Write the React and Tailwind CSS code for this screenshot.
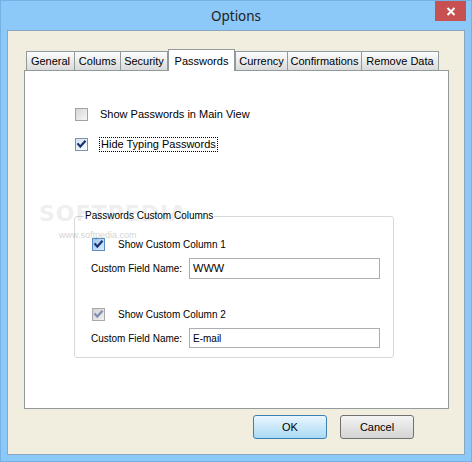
import React from "react";

const tabs = [
  { name: "General", w: "w-[48px]" },
  { name: "Colums", w: "w-[46px]" },
  { name: "Security", w: "w-[48px]" },
  { name: "Passwords", w: "w-[67px]", active: true },
  { name: "Currency", w: "w-[52px]" },
  { name: "Confirmations", w: "w-[74px]" },
  { name: "Remove Data", w: "w-[78px]", last: true },
];

function Check({ color }) {
  return (
    <svg width="11" height="11" viewBox="0 0 11 11">
      <path d="M2.2 5.2 L4.3 7.6 L8.8 2.6" fill="none" stroke={color} strokeWidth="2.2" strokeLinecap="square" />
    </svg>
  );
}

function CheckBox({ variant }) {
  if (variant === "off") {
    return (
      <div className="w-[13px] h-[13px] shrink-0 border border-[#a2a2a2] bg-linear-to-br from-[#d6d6d6] to-[#f6f6f6]" />
    );
  }
  if (variant === "hover") {
    return (
      <div className="w-[13px] h-[13px] shrink-0 border border-[#5b8dc4] bg-linear-to-br from-[#9fc6ec] to-[#dcecfa] flex items-center justify-center">
        <Check color="#1a3476" />
      </div>
    );
  }
  if (variant === "dim") {
    return (
      <div className="w-[13px] h-[13px] shrink-0 border border-[#a9a9a9] bg-linear-to-br from-[#d4d4d4] to-[#f0f0f0] flex items-center justify-center">
        <Check color="#7d8db4" />
      </div>
    );
  }
  return (
    <div className="w-[13px] h-[13px] shrink-0 border border-[#7b93ad] bg-linear-to-br from-[#d2e1f0] to-[#ffffff] flex items-center justify-center">
      <Check color="#1a3476" />
    </div>
  );
}

export default function App() {
  return (
    <div className="w-[472px] h-[462px] bg-[#8cc8f8] border border-[#76b1e6] flex flex-col font-['Liberation_Sans',Arial,sans-serif] text-[11px] text-black">
      {/* title bar */}
      <div className="h-[29px] relative flex items-center justify-center">
        <span className="font-['Noto_Sans',sans-serif] text-[13.5px] text-[#222] pt-[1px]">Options</span>
        <div className="absolute top-0 right-[5px] w-[31px] h-[20px] bg-[#c75050] flex items-center justify-center">
          <svg width="10" height="9" viewBox="0 0 10 9">
            <path d="M1.5 1 L8.5 8 M8.5 1 L1.5 8" stroke="#fff" strokeWidth="2" />
          </svg>
        </div>
      </div>

      {/* client */}
      <div className="mx-[6px] mb-[6px] flex-1 border border-[#8aa5c0] bg-[#f1eddf] flex flex-col">
        <div className="pt-[18px] pl-[16px] pr-[15px]">
          <div className="h-[21px] flex items-end pl-[2px]">
            {tabs.map((t, i) => {
              const before = tabs[i + 1] && tabs[i + 1].active;
              if (t.active) {
                return (
                  <div
                    key={t.name}
                    className={`${t.w} h-[22px] -mb-px relative z-10 bg-white border-t border-l border-r border-[#919b9c] flex justify-center pt-[3px]`}
                  >
                    {t.name}
                  </div>
                );
              }
              return (
                <div
                  key={t.name}
                  className={`${t.w} h-[19px] border-t border-l ${t.last || before ? "border-r" : ""} border-[#919b9c] bg-linear-to-b from-[#fdfdfd] to-[#dadada] flex items-center justify-center`}
                >
                  {t.name}
                </div>
              );
            })}
          </div>

          {/* panel */}
          <div className="h-[339px] border border-[#919b9c] bg-white relative flex flex-col pl-[50px] pt-[37px]">
            <div className="flex items-center h-[13px]">
              <CheckBox variant="off" />
              <span className="ml-[12px]">Show Passwords in Main View</span>
            </div>
            <div className="flex items-center h-[13px] mt-[17px]">
              <CheckBox variant="on" />
              <span className="ml-[11px] border border-dotted border-black px-[1px] leading-[13px]">Hide Typing Passwords</span>
            </div>

            {/* group box */}
            <div className="relative mt-[65px] -ml-px w-[320px] h-[142px] border border-[#d5d9dd] rounded-[3px] flex flex-col pl-[16px] pt-[21px] whitespace-nowrap text-[10px]">
              <span className="absolute -top-[7px] left-[9px] bg-white px-[1px] leading-[12px]">Passwords Custom Columns</span>
              <div className="flex items-center h-[13px] ml-[1px]">
                <CheckBox variant="hover" />
                <span className="ml-[13px]">Show Custom Column 1</span>
              </div>
              <div className="flex items-center mt-[7px]">
                <span className="w-[98px] shrink-0">Custom Field Name:</span>
                <div className="w-[191px] h-[21px] shrink-0 border border-[#abadb3] px-[3px] flex items-center text-[11px]">WWW</div>
              </div>
              <div className="flex items-center h-[13px] ml-[1px] mt-[29px]">
                <CheckBox variant="dim" />
                <span className="ml-[13px]">Show Custom Column 2</span>
              </div>
              <div className="flex items-center mt-[7px]">
                <span className="w-[98px] shrink-0">Custom Field Name:</span>
                <div className="w-[191px] h-[20px] shrink-0 border border-[#abadb3] px-[3px] flex items-center">E-mail</div>
              </div>
            </div>

            {/* watermark */}
            <div className="absolute left-[14px] top-[132px] pointer-events-none z-10 flex flex-col">
              <span className="font-['DejaVu_Sans',sans-serif] font-bold text-[22px] tracking-[1px] text-[#000] opacity-[0.06] leading-none">SOFTPEDIA<sup className="text-[7px]">™</sup></span>
              <span className="text-[9px] text-[#000] opacity-[0.18] ml-[20px] mt-[4px]">www.softpedia.com</span>
            </div>
          </div>
        </div>

        {/* buttons */}
        <div className="mt-[6px] flex justify-end gap-[13px] pr-[50px]">
          <div className="w-[74px] h-[24px] rounded-[3px] border border-[#3c7fb1] bg-linear-to-b from-[#eaf6fd] to-[#a9daf5] flex items-center justify-center">OK</div>
          <div className="w-[74px] h-[24px] rounded-[3px] border border-[#707070] bg-linear-to-b from-[#f4f4f4] to-[#d4d4d4] flex items-center justify-center">Cancel</div>
        </div>
      </div>
    </div>
  );
}
